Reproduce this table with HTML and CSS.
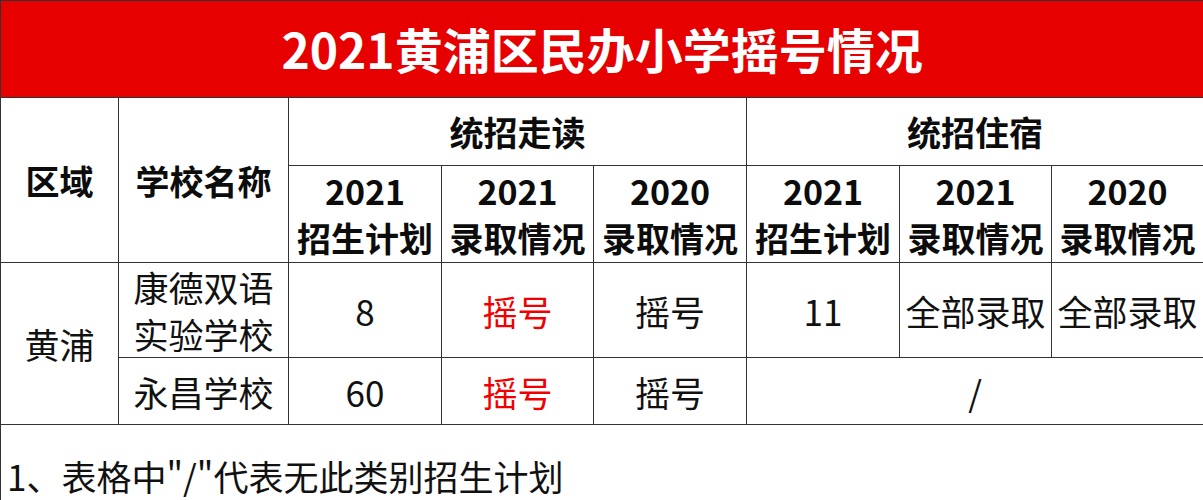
FILE: index.html
```html
<!DOCTYPE html>
<html lang="zh-CN">
<head>
<meta charset="utf-8">
<title>2021黄浦区民办小学摇号情况</title>
<link rel="stylesheet" href="styles.css">
</head>
<body>
<table class="sheet">
  <colgroup>
    <col class="c-area">
    <col class="c-school">
    <col class="c-a">
    <col class="c-b">
    <col class="c-a">
    <col class="c-a">
    <col class="c-b">
    <col class="c-b">
  </colgroup>
  <tr class="r-title">
    <td class="title" colspan="8">2021黄浦区民办小学摇号情况</td>
  </tr>
  <tr class="r-group">
    <td class="hd" rowspan="2">区域</td>
    <td class="hd" rowspan="2">学校名称</td>
    <td class="hd" colspan="3">统招走读</td>
    <td class="hd" colspan="3">统招住宿</td>
  </tr>
  <tr class="r-sub">
    <td class="hd">2021<br>招生计划</td>
    <td class="hd">2021<br>录取情况</td>
    <td class="hd">2020<br>录取情况</td>
    <td class="hd">2021<br>招生计划</td>
    <td class="hd">2021<br>录取情况</td>
    <td class="hd">2020<br>录取情况</td>
  </tr>
  <tr class="r-data1">
    <td class="dt" rowspan="2">黄浦</td>
    <td class="dt">康德双语<br>实验学校</td>
    <td class="dt">8</td>
    <td class="dt red">摇号</td>
    <td class="dt">摇号</td>
    <td class="dt">11</td>
    <td class="dt">全部录取</td>
    <td class="dt">全部录取</td>
  </tr>
  <tr class="r-data2">
    <td class="dt">永昌学校</td>
    <td class="dt">60</td>
    <td class="dt red">摇号</td>
    <td class="dt">摇号</td>
    <td class="dt" colspan="3">/</td>
  </tr>
  <tr class="r-note">
    <td class="note" colspan="8">1、表格中"/"代表无此类别招生计划</td>
  </tr>
</table>
</body>
</html>
```
FILE: styles.css
```css
html, body {
  margin: 0;
  padding: 0;
  background: #ffffff;
}
body {
  font-family: "Noto Sans CJK SC", "Noto Sans", sans-serif;
  color: #111111;
}
.sheet {
  width: 1203px;
  table-layout: fixed;
  border-collapse: collapse;
}
.c-area { width: 118px; }
.c-school { width: 170px; }
.c-a { width: 153px; }
.c-b { width: 152px; }

.sheet td {
  border: 1px solid #333333;
  padding: 0;
  text-align: center;
  vertical-align: middle;
  white-space: nowrap;
  overflow: hidden;
}
.r-title { height: 97px; }
.r-group { height: 68px; }
.r-sub { height: 97px; }
.r-data1 { height: 94px; }
.r-data2 { height: 67px; }
.r-note { height: 110px; }

.title {
  background: #e60000;
  color: #ffffff;
  font-size: 48px;
  font-weight: 700;
  line-height: 60px;
  padding-bottom: 3px !important;
  border-top: 2px solid #4a1010;
  border-left: 2px solid #4a1010;
}
.hd {
  font-size: 34px;
  font-weight: 700;
  line-height: 47px;
  color: #0c0c0c;
}
.dt {
  font-size: 35px;
  font-weight: 400;
  line-height: 47px;
  color: #111111;
}
.red { color: #f00000; }
.note {
  font-size: 35px;
  font-weight: 400;
  line-height: 47px;
  text-align: left !important;
  vertical-align: top !important;
  padding: 27px 0 0 6px !important;
  border-bottom: none !important;
}
```
